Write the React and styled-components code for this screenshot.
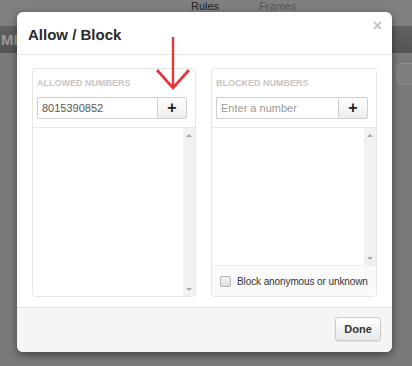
import React from "react";
import styled, { createGlobalStyle } from "styled-components";

const GlobalStyle = createGlobalStyle`
  html, body {
    margin: 0;
    padding: 0;
    background: #7a7a7a;
    font-family: "Liberation Sans", Arial, sans-serif;
    overflow: hidden;
  }
`;

function Panel({ title, placeholder, value, footer, grow }) {
  return (
    <PanelBox $grow={grow}>
      <PanelLabel>{title}</PanelLabel>
      <InputRow>
        <NumberInput placeholder={placeholder} defaultValue={value} />
        <AddButton>+</AddButton>
      </InputRow>
      <ListBox>
        <ListArea />
        <Scrollbar>
          <ScrollArrow $dir="up" />
          <ScrollArrow $dir="down" />
        </Scrollbar>
      </ListBox>
      {footer}
    </PanelBox>
  );
}

function App() {
  return (
    <>
      <GlobalStyle />
      <Page>
        <TopNav>
          <NavTab $active>Rules</NavTab>
          <NavTab>Frames</NavTab>
        </TopNav>
        <DarkBand>
          <BandText>MI</BandText>
        </DarkBand>
        <PageBody>
          <GhostButton />
        </PageBody>

        <Modal>
          <ModalHeader>
            <Title>Allow / Block</Title>
            <Close>×</Close>
          </ModalHeader>
          <ModalBody>
            <Panel title="Allowed Numbers" value="8015390852" grow={164} />
            <Panel
              title="Blocked Numbers"
              placeholder="Enter a number"
              grow={166}
              footer={
                <CheckRow>
                  <CheckBox />
                  <span>Block anonymous or unknown</span>
                </CheckRow>
              }
            />
          </ModalBody>
          <ModalFooter>
            <DoneButton>Done</DoneButton>
          </ModalFooter>
          <Arrow width="36" height="54" viewBox="0 0 36 54">
            <path d="M18 0 V50" stroke="#e8363b" strokeWidth="2.4" fill="none" />
            <path d="M2 33 L18 51 L34 33" stroke="#e8363b" strokeWidth="2.8" fill="none" />
          </Arrow>
        </Modal>
      </Page>
    </>
  );
}

const Page = styled.div`
  position: relative;
  width: 412px;
  height: 366px;
  background: #7a7a7a;
`;

const TopNav = styled.div`
  height: 26px;
  background: #7f7f7f;
  display: flex;
  align-items: flex-start;
  gap: 40px;
  padding-left: 191px;
  font-size: 11px;
  line-height: 12px;
  box-sizing: border-box;
`;

const NavTab = styled.span`
  color: ${(p) => (p.$active ? "#222" : "#555")};
`;

const DarkBand = styled.div`
  height: 27px;
  background: linear-gradient(#626262, #545454);
  display: flex;
  align-items: center;
`;

const BandText = styled.span`
  color: #9a9a9a;
  font-weight: bold;
  font-size: 15px;
  padding-left: 1px;
`;

const PageBody = styled.div`
  display: flex;
  justify-content: flex-end;
  padding-top: 10px;
`;

const GhostButton = styled.div`
  width: 14px;
  height: 20px;
  border: 1px solid #8a8a8a;
  border-right: none;
  border-radius: 3px 0 0 3px;
  background: #7e7e7e;
`;

const Modal = styled.div`
  position: absolute;
  left: 17px;
  top: 12px;
  width: 375px;
  height: 340px;
  background: #fff;
  border-radius: 6px;
  box-shadow: 0 3px 8px rgba(0, 0, 0, 0.45);
  display: flex;
  flex-direction: column;
`;

const ModalHeader = styled.div`
  height: 43px;
  border-bottom: 1px solid #e8e8e8;
  display: flex;
  align-items: center;
  justify-content: space-between;
  padding: 0 10px 0 11px;
  box-sizing: border-box;
`;

const Title = styled.h3`
  margin: 2px 0 0;
  font-size: 15px;
  font-weight: bold;
  color: #2b2b2b;
`;

const Close = styled.span`
  color: #c4c4c4;
  font-size: 16px;
  font-weight: bold;
  margin-top: -14px;
`;

const ModalBody = styled.div`
  flex: 1;
  display: flex;
  gap: 15px;
  padding: 13px 15px 10px;
`;

const PanelBox = styled.div`
  flex: ${(p) => p.$grow} 1 0;
  border: 1px solid #e6e6e6;
  border-radius: 4px;
  display: flex;
  flex-direction: column;
  overflow: hidden;
`;

const PanelLabel = styled.div`
  font-size: 9px;
  font-weight: bold;
  text-transform: uppercase;
  color: #c6c6c6;
  padding: 9px 4px 0;
  line-height: 10px;
`;

const InputRow = styled.div`
  display: flex;
  margin: 9px 8px 8px 4px;
  height: 22px;
`;

const NumberInput = styled.input`
  flex: 1;
  min-width: 0;
  height: 22px;
  box-sizing: border-box;
  border: 1px solid #cfcfcf;
  border-right: none;
  border-radius: 2px 0 0 2px;
  padding: 0 4px;
  font-family: inherit;
  font-size: 11px;
  color: #555;
  outline: none;
  &::placeholder {
    color: #999;
  }
`;

const AddButton = styled.button`
  width: 30px;
  height: 22px;
  padding: 0;
  border: 1px solid #cfcfcf;
  border-radius: 0 2px 2px 0;
  background: linear-gradient(#ffffff, #ececec);
  font-family: inherit;
  font-size: 16px;
  font-weight: bold;
  line-height: 18px;
  color: #222;
`;

const ListBox = styled.div`
  flex: 1;
  display: flex;
  border-top: 1px solid #e6e6e6;
`;

const ListArea = styled.div`
  flex: 1;
`;

const Scrollbar = styled.div`
  width: 12px;
  background: #f1f1f1;
  display: flex;
  flex-direction: column;
  justify-content: space-between;
  align-items: center;
  padding: 6px 0 5px;
`;

const ScrollArrow = styled.span`
  width: 0;
  height: 0;
  border-left: 3px solid transparent;
  border-right: 3px solid transparent;
  ${(p) =>
    p.$dir === "up"
      ? "border-bottom: 3px solid #a8a8a8;"
      : "border-top: 3px solid #a8a8a8;"}
`;

const CheckRow = styled.div`
  height: 30px;
  display: flex;
  align-items: center;
  gap: 6px;
  padding-left: 8px;
  border-top: 1px solid #ececec;
  background: #fafafa;
  font-size: 10px;
  letter-spacing: -0.1px;
  white-space: nowrap;
  color: #333;
`;

const CheckBox = styled.span`
  flex: none;
  width: 9px;
  height: 9px;
  border: 1px solid #b5b5b5;
  border-radius: 2px;
  background: linear-gradient(#f4f4f4, #dcdcdc);
`;

const ModalFooter = styled.div`
  height: 45px;
  box-sizing: border-box;
  background: #f5f5f5;
  border-top: 1px solid #e4e4e4;
  border-radius: 0 0 6px 6px;
  display: flex;
  align-items: center;
  justify-content: flex-end;
  padding: 0 11px 2px 0;
`;

const DoneButton = styled.button`
  width: 46px;
  height: 24px;
  border: 1px solid #cccccc;
  border-radius: 3px;
  background: linear-gradient(#ffffff, #e8e8e8);
  box-shadow: 0 1px 1px rgba(0, 0, 0, 0.08);
  font-family: inherit;
  font-size: 11px;
  font-weight: bold;
  color: #333;
  padding: 0;
`;

const Arrow = styled.svg`
  position: absolute;
  left: 138px;
  top: 25px;
`;

export default App;
